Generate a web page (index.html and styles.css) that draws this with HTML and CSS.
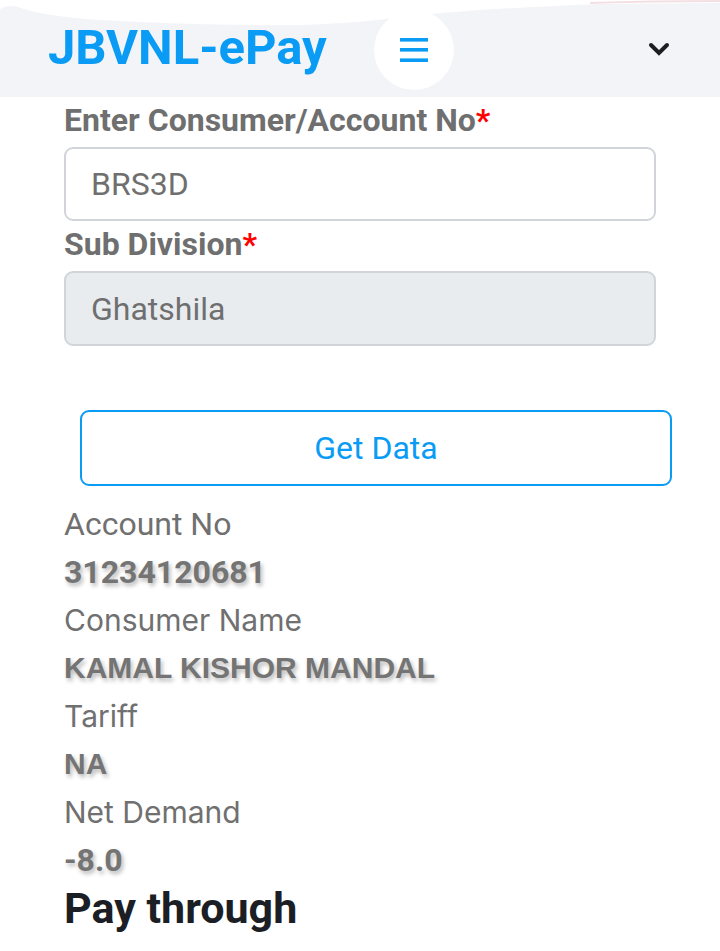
FILE: index.html
```html
<!DOCTYPE html>
<html lang="en">
<head>
<meta charset="utf-8">
<title>JBVNL-ePay</title>
<link rel="stylesheet" href="styles.css">
</head>
<body>
<header class="topbar">
  <svg class="wave" width="720" height="40" viewBox="0 0 720 40" aria-hidden="true">
    <path d="M0,0 L0,9 Q8,4 18,7 Q40,16 100,20 Q200,26 300,25 Q360,23 400,17 Q450,12 480,10 Q550,6 600,4 L720,3 L720,0 Z" fill="#ffffff"/>
    <path d="M590,3 Q650,1 720,1" stroke="#f3dfe3" stroke-width="2" fill="none"/>
  </svg>
  <span class="brand">JBVNL-ePay</span>
  <button class="menu-btn" aria-label="menu">
    <svg width="28" height="26" viewBox="0 0 28 26">
      <rect x="0" y="1" width="28" height="3.6" fill="#0a9cf5"/>
      <rect x="0" y="11" width="28" height="3.6" fill="#0a9cf5"/>
      <rect x="0" y="21.4" width="28" height="3.6" fill="#0a9cf5"/>
    </svg>
  </button>
  <span class="spacer"></span>
  <svg class="chevron" width="22" height="16" viewBox="0 0 22 16" aria-hidden="true">
    <path d="M3,4 L11,12 L19,4" stroke="#1c1e22" stroke-width="4" fill="none" stroke-linecap="round" stroke-linejoin="miter"/>
  </svg>
</header>

<main class="content">
  <form class="form">
    <label class="field-label">Enter Consumer/Account No<span class="req">*</span></label>
    <div class="input">BRS3D</div>
    <label class="field-label">Sub Division<span class="req">*</span></label>
    <div class="input input-disabled">Ghatshila</div>
    <div class="btn-row">
      <button type="button" class="btn-outline">Get Data</button>
    </div>
  </form>

  <dl class="details">
    <dt class="k k-roboto">Account No</dt>
    <dd class="v v-roboto">31234120681</dd>
    <dt class="k">Consumer Name</dt>
    <dd class="v">KAMAL KISHOR MANDAL</dd>
    <dt class="k">Tariff</dt>
    <dd class="v">NA</dd>
    <dt class="k">Net Demand</dt>
    <dd class="v v-roboto">-8.0</dd>
  </dl>
  <h2 class="pay">Pay through</h2>
</main>
</body>
</html>
```

FILE: styles.css
```css
* { box-sizing: border-box; }
html, body { margin: 0; padding: 0; background: #ffffff; }
body { font-family: Roboto, "Noto Sans", sans-serif; width: 720px; overflow: hidden; }

.topbar {
  position: relative;
  height: 97px;
  background: #f3f4f8;
  display: flex;
  align-items: center;
  padding: 0 48px;
}
.wave { position: absolute; left: 0; top: 0; z-index: 0; }
.brand {
  position: relative;
  z-index: 1;
  font-family: Roboto, sans-serif;
  font-weight: 700;
  font-size: 49px;
  color: #0a9cf5;
  letter-spacing: 0;
  margin-top: -2px;
}
.menu-btn {
  position: relative;
  z-index: 1;
  width: 80px;
  height: 80px;
  border-radius: 50%;
  background: #ffffff;
  border: none;
  margin-left: 47px;
  display: flex;
  align-items: center;
  justify-content: center;
  padding: 0;
  margin-top: 2px;
}
.spacer { flex: 1; }
.chevron { position: relative; z-index: 1; margin-right: 2px; }

.content { padding: 0 64px; }
.form { display: flex; flex-direction: column; }
.field-label {
  display: block;
  padding-top: 5px;
  line-height: 37px;
  margin-bottom: 8px;
  font-weight: 700;
  font-size: 32px;
  color: #6f6f6f;
  white-space: nowrap;
}
.req { color: #ff0000; }
.input {
  height: 74px;
  border: 2px solid #d1d5da;
  border-radius: 9px;
  padding: 0 25px;
  display: flex;
  align-items: center;
  font-size: 32px;
  color: #6f6f6f;
  background: #ffffff;
}
.input-disabled { background: #e9ecef; height: 75px; }
.btn-row { padding: 64px 0 0 16px; margin-right: -16px; }
.btn-outline {
  width: 100%;
  height: 76px;
  background: #ffffff;
  border: 2px solid #0a9cf5;
  border-radius: 9px;
  font-family: Roboto, sans-serif;
  font-size: 32px;
  color: #0a9cf5;
  padding: 0;
}

.details { margin: 14px 0 0; }
.k, .v { margin: 0; height: 48px; line-height: 48px; white-space: nowrap; }
.k { font-family: Inter, Roboto, sans-serif; font-size: 30px; color: #707070; }
.k-roboto { font-family: Roboto, sans-serif; font-size: 32px; }
.v {
  font-family: "Liberation Sans", Arial, sans-serif;
  font-weight: 700;
  font-size: 30px;
  color: #747474;
  text-shadow: 2px 3px 4px #b9b9b9;
}
.v-roboto { font-family: Roboto, sans-serif; font-size: 32px; }
.pay {
  margin: 0;
  height: 48px;
  line-height: 48px;
  font-family: Roboto, sans-serif;
  font-weight: 700;
  font-size: 43px;
  color: #1b1e24;
}
```
